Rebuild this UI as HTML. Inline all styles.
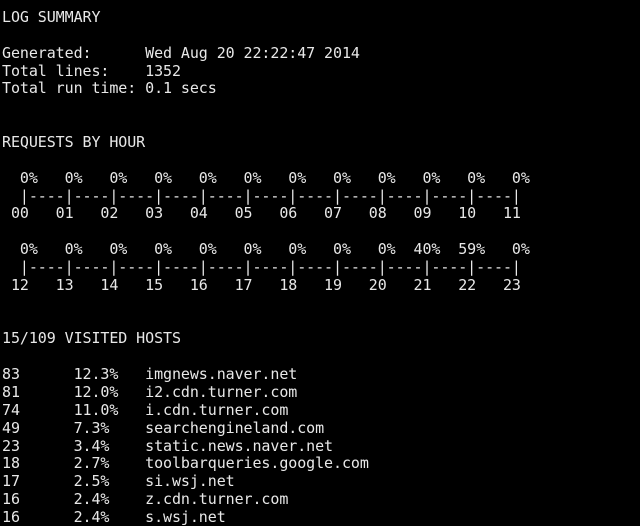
<!DOCTYPE html>
<html><head><style>
html,body{margin:0;padding:0;background:#000;width:640px;height:526px;overflow:hidden}
pre{margin:0;padding:9px 0 0 2px;color:#e8e8e8;font-family:"DejaVu Sans Mono","Liberation Mono",monospace;font-size:15px;letter-spacing:-0.085px;line-height:17.86px;white-space:pre}
</style></head><body><pre>LOG SUMMARY

Generated:      Wed Aug 20 22:22:47 2014
Total lines:    1352
Total run time: 0.1 secs


REQUESTS BY HOUR

  0%   0%   0%   0%   0%   0%   0%   0%   0%   0%   0%   0%
  |----|----|----|----|----|----|----|----|----|----|----|
 00   01   02   03   04   05   06   07   08   09   10   11

  0%   0%   0%   0%   0%   0%   0%   0%   0%  40%  59%   0%
  |----|----|----|----|----|----|----|----|----|----|----|
 12   13   14   15   16   17   18   19   20   21   22   23


15/109 VISITED HOSTS

83      12.3%   imgnews.naver.net
81      12.0%   i2.cdn.turner.com
74      11.0%   i.cdn.turner.com
49      7.3%    searchengineland.com
23      3.4%    static.news.naver.net
18      2.7%    toolbarqueries.google.com
17      2.5%    si.wsj.net
16      2.4%    z.cdn.turner.com
16      2.4%    s.wsj.net</pre></body></html>
